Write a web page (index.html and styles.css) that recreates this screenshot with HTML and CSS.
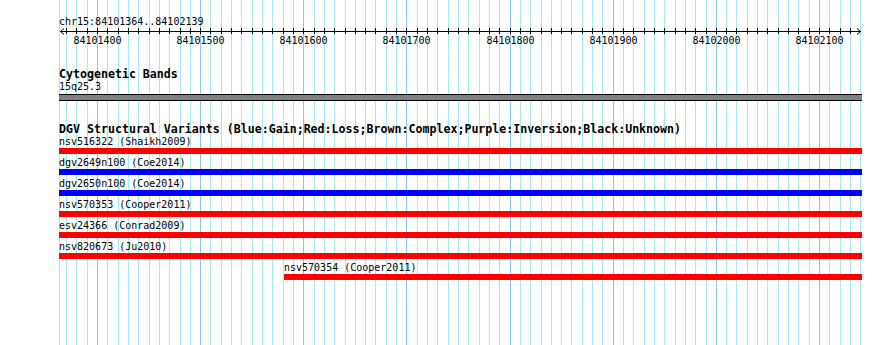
FILE: index.html
```html
<!DOCTYPE html>
<html lang="en">
<head>
  <meta charset="UTF-8">
  <title>chr15:84101364..84102139</title>
  <link rel="stylesheet" href="styles.css">
</head>
<body>
  <div class="panel">
    <svg class="grid" id="grid" width="890" height="345"></svg>

    <div class="ruler">
      <div class="ruler-title">chr15:84101364..84102139</div>
      <svg class="axis" id="axis" width="890" height="9"></svg>
      <div class="ruler-labels" id="rulerLabels"></div>
    </div>

    <div class="track">
      <div class="track-title">Cytogenetic Bands</div>
      <div class="feature">
        <div class="label">15q25.3</div>
        <div class="band"></div>
      </div>
    </div>

    <div class="track">
      <div class="track-title">DGV Structural Variants (Blue:Gain;Red:Loss;Brown:Complex;Purple:Inversion;Black:Unknown)</div>
      <div class="feature">
        <div class="label">nsv516322 (Shaikh2009)</div>
        <div class="bar loss"></div>
      </div>
      <div class="feature">
        <div class="label">dgv2649n100 (Coe2014)</div>
        <div class="bar gain"></div>
      </div>
      <div class="feature">
        <div class="label">dgv2650n100 (Coe2014)</div>
        <div class="bar gain"></div>
      </div>
      <div class="feature">
        <div class="label">nsv570353 (Cooper2011)</div>
        <div class="bar loss"></div>
      </div>
      <div class="feature">
        <div class="label">esv24366 (Conrad2009)</div>
        <div class="bar loss"></div>
      </div>
      <div class="feature">
        <div class="label">nsv820673 (Ju2010)</div>
        <div class="bar loss"></div>
      </div>
      <div class="feature" style="margin-left: 225px;">
        <div class="label">nsv570354 (Cooper2011)</div>
        <div class="bar loss" style="width: 578px;"></div>
      </div>
    </div>
  </div>

  <script>
    const NS = 'http://www.w3.org/2000/svg';
    const grid = document.getElementById('grid');
    const axis = document.getElementById('axis');
    const rulerLabels = document.getElementById('rulerLabels');

    // screen x of a base position
    function px(bp) {
      return Math.round(97 + (bp - 84101400) * 1.0314);
    }

    function line(svg, x1, y1, x2, y2, cls) {
      const l = document.createElementNS(NS, 'line');
      l.setAttribute('x1', x1);
      l.setAttribute('y1', y1);
      l.setAttribute('x2', x2);
      l.setAttribute('y2', y2);
      l.setAttribute('class', cls);
      svg.appendChild(l);
    }

    // edge lines of the region
    line(grid, 59.5, 0, 59.5, 345, 'minor');
    line(grid, 860.5, 0, 860.5, 345, 'minor');

    for (let bp = 84101370; bp <= 84102130; bp += 10) {
      const x = px(bp) + 0.5;
      const major = bp % 100 === 0;
      line(grid, x, 0, x, 345, major ? 'major' : 'minor');
      line(axis, x, 1, x, 7, 'tick');
      if (major) {
        const span = document.createElement('span');
        span.className = 'tick-label';
        span.textContent = bp;
        span.style.left = (px(bp) + 0.5) + 'px';
        rulerLabels.appendChild(span);
      }
    }

    line(axis, 60, 4.5, 861, 4.5, 'tick');
    const arrows = document.createElementNS(NS, 'path');
    arrows.setAttribute('d', 'M64 1.5 L60.5 4.5 L64 7.5 M857 1.5 L860.5 4.5 L857 7.5');
    arrows.setAttribute('class', 'arrow');
    axis.appendChild(arrows);
  </script>
</body>
</html>
```

FILE: styles.css
```css
body {
  margin: 0;
  background: #fff;
  color: #000;
  font-family: "DejaVu Sans Mono", "Liberation Mono", monospace;
  font-size: 10px;
}
.panel {
  position: relative;
  width: 890px;
  height: 345px;
  overflow: hidden;
}
.grid {
  position: absolute;
  top: 0;
  left: 0;
}
.grid .minor {
  stroke: #a8e8ee;
  stroke-width: 1;
}
.grid .major {
  stroke: #8cc8e8;
  stroke-width: 1;
}
.ruler {
  position: relative;
  padding-top: 17px;
}
.ruler-title {
  padding-left: 59px;
  line-height: 10px;
}
.axis {
  display: block;
}
.axis .tick {
  stroke: #000;
  stroke-width: 1;
}
.axis .arrow {
  fill: none;
  stroke: #000;
  stroke-width: 1;
}
.ruler-labels {
  position: relative;
  height: 10px;
  line-height: 10px;
}
.tick-label {
  position: absolute;
  top: 0;
  transform: translateX(-50%);
}
.track {
  position: relative;
  margin-top: 22px;
  padding-left: 59px;
}
.track-title {
  font-weight: bold;
  font-size: 11.62px;
  line-height: 12px;
  white-space: nowrap;
}
.feature {
  margin-top: 4px;
}
.track-title + .feature {
  margin-top: 2px;
}
.label {
  line-height: 10px;
  white-space: nowrap;
}
.band {
  width: 803px;
  height: 5px;
  margin-top: 2px;
  background: #808080;
  border-top: 1px solid #000;
  border-bottom: 1px solid #000;
}
.bar {
  width: 803px;
  height: 6px;
  margin-top: 1px;
}
.bar.loss {
  background: #ff0000;
}
.bar.gain {
  background: #0000ff;
}
```
